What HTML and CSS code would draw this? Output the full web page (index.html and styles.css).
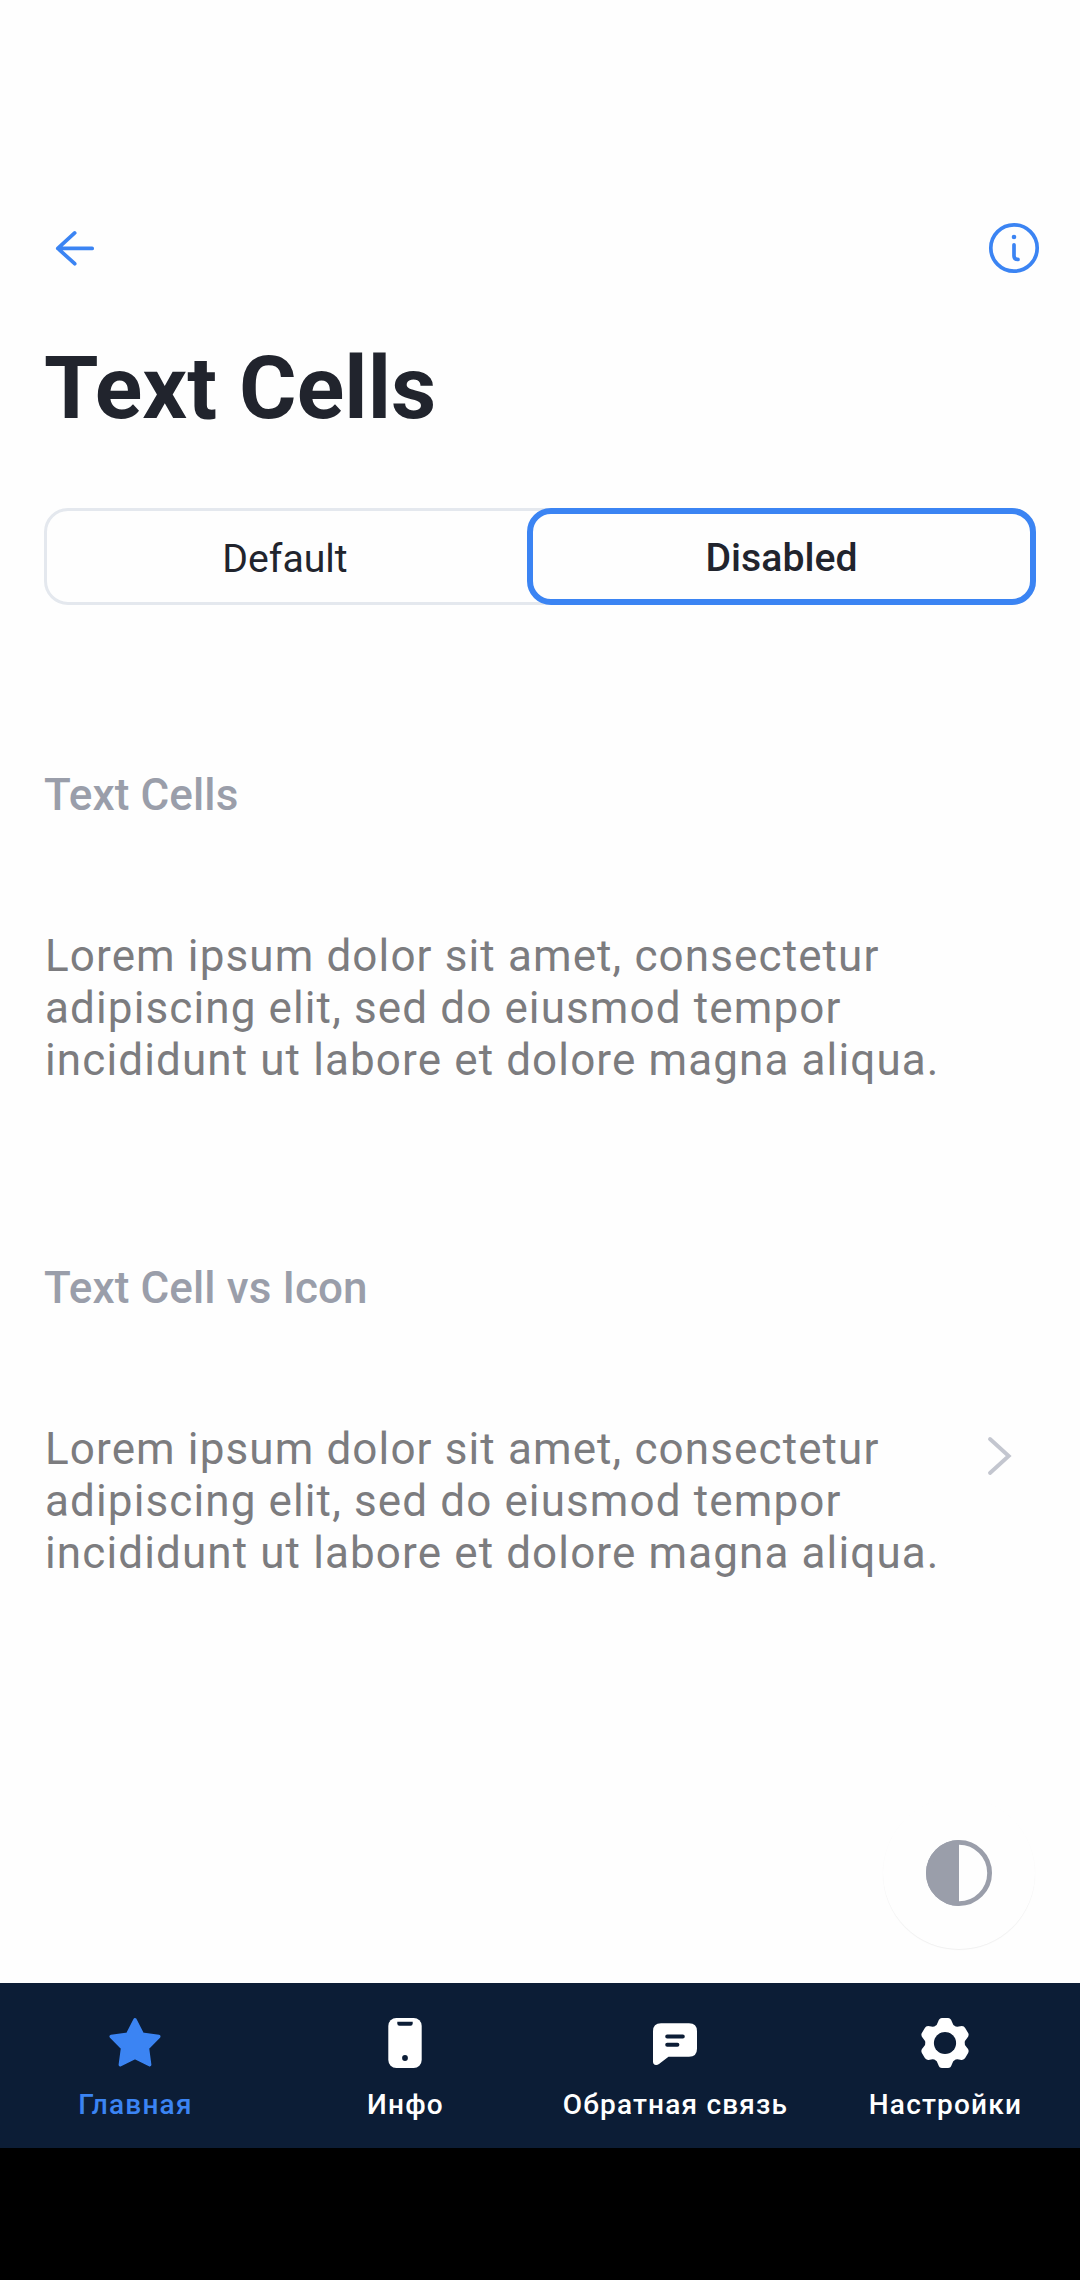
FILE: index.html
```html
<!DOCTYPE html>
<html lang="ru">
<head>
<meta charset="utf-8">
<title>Text Cells</title>
<link rel="stylesheet" href="styles.css">
</head>
<body>
<div class="screen">
<header class="toolbar">
<svg class="back" width="48" height="52" viewBox="0 0 48 52"><path d="M41.2 26.4H7M23.7 10.9 6.8 26.4l16.9 15.3"/></svg>
<svg class="info" width="52" height="52" viewBox="0 0 52 52"><circle cx="26" cy="26" r="23.2"/><path d="M26 22.8V34Q26 37.4 30 37.4"/><circle class="dot" cx="26" cy="15" r="2.3"/></svg>
</header>
<h1 class="title">Text Cells</h1>
<div class="tabs"><div class="tab">Default</div><div class="tab active">Disabled</div></div>
<main class="content">
<section class="section"><h2 class="heading">Text Cells</h2>
<div class="cell"><p class="text">Lorem ipsum dolor sit amet, consectetur<br>adipiscing elit, sed do eiusmod tempor<br>incididunt ut labore et dolore magna aliqua.</p></div></section>
<section class="section"><h2 class="heading">Text Cell vs Icon</h2>
<div class="cell"><p class="text">Lorem ipsum dolor sit amet, consectetur<br>adipiscing elit, sed do eiusmod tempor<br>incididunt ut labore et dolore magna aliqua.</p>
<svg class="chevron" width="30" height="44" viewBox="0 0 30 44"><path d="m5 5 18.7 17L5 39"/></svg></div></section>
</main>
<button class="theme" aria-label="Theme"><svg width="66" height="66" viewBox="0 0 66 66"><circle class="ring" cx="33" cy="33" r="30.6"/><path d="M33 0a33 33 0 0 0 0 66z"/></svg></button>
<nav class="nav">
<div class="item current"><svg width="54" height="54" viewBox="0 0 54 54"><path class="star" d="m27 3.7 7.3 14.4 16.5 2.4L39.5 32.1l2.2 16.6L27 41.4l-14.7 7.3 2.2-16.6L3.2 20.5l16.5-2.4z"/></svg><span>Главная</span></div>
<div class="item"><svg width="54" height="54" viewBox="0 0 54 54"><rect x="10.3" y="2" width="33.4" height="50" rx="8"/><path class="hole" d="M19.3 5.7h15.4v1.8q0 2.2-2.2 2.2h-11q-2.2 0-2.2-2.2z"/><circle class="hole" cx="27" cy="42" r="2.9"/></svg><span>Инфо</span></div>
<div class="item"><svg width="54" height="54" viewBox="0 0 54 54"><path d="M13 7.3h28q8 0 8 8v17.5q0 8-8 8H20.5L11 48q-1.5 1.1-3 1-3-.4-3-3.5V15.3q0-8 8-8z"/><path class="lines" d="M19.2 20.4h15.6M19.2 28.7h10.2"/></svg><span>Обратная связь</span></div>
<div class="item"><svg width="54" height="54" viewBox="0 0 54 54"><defs><path id="tooth" d="M27 27 16.8 10.3Q19 9.5 20.2 5.5 21.2 2 24 2h6q2.8 0 3.8 3.5 1.2 4 3.4 4.8z"/></defs><circle cx="27" cy="27" r="19"/><use href="#tooth"/><use href="#tooth" transform="rotate(60 27 27)"/><use href="#tooth" transform="rotate(120 27 27)"/><use href="#tooth" transform="rotate(180 27 27)"/><use href="#tooth" transform="rotate(240 27 27)"/><use href="#tooth" transform="rotate(300 27 27)"/><circle class="hole" cx="27" cy="27" r="11.1"/></svg><span>Настройки</span></div>
</nav>
<div class="system"></div>
</div>
</body>
</html>
```
FILE: styles.css
```css
*{box-sizing:border-box}
body{margin:0;font-family:Roboto,sans-serif;background:#fefefe}
svg{display:block;flex:none}
.screen{position:relative;width:1080px;height:2280px;display:flex;flex-direction:column}
.toolbar{height:330px;padding:222px 40px 0 51px;display:flex;justify-content:space-between}
.toolbar svg{fill:none;stroke:#3b84f3;stroke-width:3.7;stroke-linecap:round;stroke-linejoin:round}
.toolbar .dot{fill:#3b84f3;stroke:none}
.title{margin:0;padding-left:44px;height:178px;font-size:88px;line-height:116px;letter-spacing:.1px;font-weight:700;color:#21242d}
.tabs{margin:0 44px;height:97px;border:3px solid #e4e8ee;border-radius:24px;display:flex;flex:none}
.tab{flex:1;display:flex;align-items:center;justify-content:center;padding:4px 7px 0 0;font-size:39.2px;color:#21242d}
.active{flex:none;width:509px;margin:-3px;padding:3px 0 0;border:6px solid #3b84f3;border-radius:24px;font-weight:500}
.content{flex:1;padding:155px 44px 0}
.section{height:493px}
.heading{margin:0;height:170px;font-size:44px;line-height:70px;letter-spacing:.1px;font-weight:500;color:#9a9eaa}
.cell{display:flex;justify-content:space-between;padding:0 21px 0 1px}
.text{margin:0;font-size:44px;line-height:52px;letter-spacing:1.12px;color:#7c7c7f}
.chevron{margin-top:11px;fill:none;stroke:#c3c6cf;stroke-width:3.9;stroke-linecap:round}
.theme{position:absolute;left:883px;top:1797px;width:152px;height:152px;padding:0;display:grid;place-items:center;border:0;border-radius:50%;background:#fefefe;box-shadow:0 1px 1px rgba(0,0,0,.06)}
.theme svg{fill:#9a9eaa}
.theme .ring{fill:none;stroke:#9a9eaa;stroke-width:4.8}
.nav{height:165px;background:#0c1d36;display:flex;padding-top:33px}
.item{width:270px;display:flex;flex-direction:column;align-items:center;color:#fff;fill:#fff;font-size:28px;font-weight:500;letter-spacing:1.2px;line-height:36px}
.item span{margin-top:17px;padding-left:1px}
.current{color:#3b84f3;fill:#3b84f3}
.star{stroke:#3b84f3;stroke-width:3.4;stroke-linejoin:round}
.hole{fill:#0c1d36}
.lines{fill:none;stroke:#0c1d36;stroke-width:4;stroke-linecap:round}
.system{height:132px;background:#000}
```
